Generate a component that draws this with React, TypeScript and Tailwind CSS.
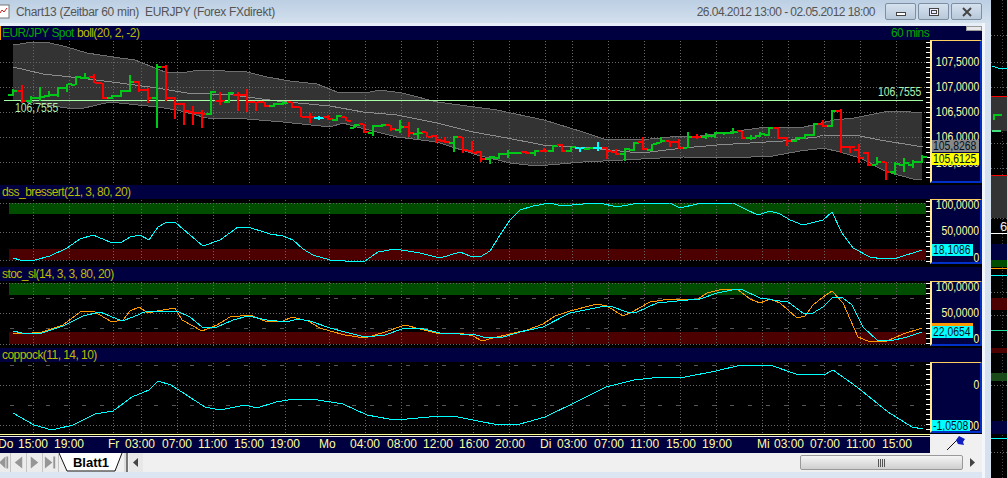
import type { ReactNode } from 'react'

type Bar = [number, number, number, number, number, string]
type Pt = [number, number]

const G = '#00c818'
const R = '#ff0000'
const C = '#00ffff'

// x, high, low, open, close, colour (page pixels)
const bars: Bar[] = [
  [13, 89, 96, 95, 91, G], [22, 85, 103, 91, 101, R], [31, 96, 103, 101, 98, G], [40, 87, 101, 98, 97, G],
  [49, 91, 97, 96, 95, G], [58, 87, 97, 95, 88, G], [67, 84, 92, 88, 84, G], [76, 76, 85, 85, 77, G],
  [85, 73, 79, 78, 78, G], [94, 74, 83, 77, 83, R], [103, 83, 99, 83, 98, R], [112, 95, 99, 98, 96, G],
  [121, 90, 97, 96, 91, G], [130, 75, 92, 91, 82, G], [139, 81, 92, 82, 90, R], [148, 88, 103, 90, 98, R],
  [157, 64, 128, 98, 67, G], [166, 65, 101, 67, 98, R], [175, 97, 119, 98, 104, R], [184, 103, 125, 104, 111, R],
  [193, 106, 125, 112, 113, R], [202, 110, 128, 113, 114, R], [211, 91, 115, 114, 92, G], [220, 92, 105, 101, 101, R],
  [229, 92, 103, 102, 93, G], [238, 92, 111, 95, 95, R], [247, 89, 112, 95, 102, R], [256, 102, 111, 102, 102, R],
  [265, 102, 107, 102, 106, R], [274, 103, 107, 106, 104, G], [283, 101, 105, 104, 103, G], [292, 102, 108, 102, 107, R],
  [301, 107, 117, 107, 117, R], [310, 113, 123, 117, 117, R], [319, 116, 120, 118, 118, C], [328, 115, 120, 117, 119, R],
  [337, 115, 121, 120, 116, G], [346, 117, 121, 117, 121, R], [355, 124, 128, 128, 125, G], [364, 124, 133, 124, 132, R],
  [373, 125, 136, 133, 126, G], [382, 124, 127, 126, 125, G], [391, 125, 131, 125, 129, R], [400, 120, 133, 130, 127, G],
  [409, 122, 137, 127, 133, R], [418, 128, 139, 134, 133, G], [427, 132, 137, 132, 137, R], [436, 135, 143, 136, 140, R],
  [445, 137, 143, 141, 142, R], [454, 136, 152, 143, 137, G], [463, 137, 153, 137, 150, R], [472, 141, 153, 151, 153, R],
  [481, 151, 162, 152, 159, R], [490, 156, 164, 159, 157, G], [499, 153, 159, 158, 154, G], [508, 150, 158, 154, 153, G],
  [517, 152, 154, 153, 153, G], [526, 151, 154, 152, 153, R], [535, 150, 156, 153, 151, G], [544, 148, 152, 151, 151, R],
  [553, 145, 152, 151, 146, G], [562, 144, 152, 145, 151, R], [571, 147, 152, 151, 147, G], [580, 148, 152, 148, 148, C],
  [589, 148, 150, 149, 148, G], [598, 142, 151, 148, 148, C], [607, 147, 159, 148, 151, R], [616, 149, 155, 152, 154, R],
  [625, 148, 161, 154, 149, G], [634, 142, 151, 150, 143, G], [643, 137, 150, 142, 149, R], [652, 144, 151, 150, 144, G],
  [661, 137, 143, 143, 141, G], [670, 141, 147, 141, 142, R], [679, 139, 149, 142, 148, R], [688, 132, 148, 148, 137, G],
  [697, 134, 139, 137, 137, R], [706, 133, 139, 137, 136, G], [715, 132, 138, 136, 133, G], [724, 132, 135, 133, 133, G],
  [733, 128, 134, 133, 132, G], [742, 131, 139, 131, 138, R], [751, 135, 140, 138, 138, G], [760, 132, 137, 136, 134, G],
  [769, 127, 136, 135, 128, G], [778, 127, 139, 128, 138, R], [787, 137, 146, 138, 141, R], [796, 137, 142, 141, 138, G],
  [805, 134, 139, 138, 135, G], [814, 123, 136, 135, 124, G], [823, 120, 127, 124, 126, R], [832, 110, 127, 126, 111, G],
  [841, 109, 153, 111, 147, R], [850, 146, 153, 147, 147, R], [859, 144, 163, 150, 158, R], [868, 152, 166, 153, 165, R],
  [877, 157, 165, 165, 162, G], [886, 162, 180, 162, 172, R], [895, 162, 175, 172, 164, G], [904, 158, 172, 165, 163, G],
  [913, 160, 168, 165, 162, G], [922, 155, 163, 162, 157, G],
]

const upper: Pt[] = [[13, 45], [33, 42], [46, 42], [67, 47], [87, 53], [113, 57], [135, 60], [150, 66], [165, 72], [180, 73], [200, 70], [225, 71], [247, 72], [267, 77], [290, 81], [317, 84], [337, 92], [365, 93], [380, 90], [402, 93], [437, 102], [497, 110], [544, 120], [583, 132], [607, 140], [650, 139], [670, 137], [700, 136], [737, 131], [767, 127], [800, 128], [834, 120], [854, 118], [884, 112], [900, 111], [922, 113]]
const middle: Pt[] = [[13, 67], [43, 74], [80, 78], [120, 83], [157, 88], [187, 93], [233, 95], [277, 101], [330, 106], [363, 112], [397, 115], [437, 123], [473, 132], [507, 138], [543, 145], [590, 148], [630, 152], [650, 152], [683, 148], [717, 145], [750, 143], [783, 141], [817, 137], [823, 135], [860, 136], [880, 140], [923, 147]]
const lower: Pt[] = [[13, 100], [67, 108], [80, 109], [110, 102], [157, 107], [177, 110], [207, 118], [247, 119], [283, 122], [330, 127], [343, 123], [357, 127], [397, 137], [437, 142], [477, 155], [510, 163], [537, 166], [583, 162], [623, 160], [660, 158], [683, 157], [730, 158], [773, 156], [800, 151], [817, 149], [823, 148], [840, 152], [860, 158], [887, 172], [913, 179], [922, 180]]

const dss: Pt[] = [[13, 258], [20, 260], [35, 260], [50, 256], [67, 248], [80, 239], [93, 235], [110, 242], [122, 242], [130, 237], [140, 235], [149, 240], [158, 227], [167, 222], [176, 223], [190, 235], [203, 246], [220, 240], [238, 227], [248, 227], [270, 234], [283, 236], [293, 240], [303, 249], [313, 255], [330, 260], [345, 261], [365, 261], [378, 252], [395, 249], [420, 253], [440, 258], [460, 252], [470, 256], [480, 257], [490, 251], [500, 235], [510, 220], [520, 210], [533, 206], [550, 203], [562, 206], [583, 204], [600, 203], [617, 207], [633, 204], [670, 203], [680, 208], [697, 204], [733, 203], [747, 210], [758, 215], [770, 211], [780, 214], [790, 220], [803, 225], [823, 220], [832, 212], [842, 233], [853, 248], [870, 257], [883, 259], [897, 258], [922, 250]]
const stocBlue: Pt[] = [[13, 331], [22, 333], [42, 333], [63, 326], [83, 316], [100, 312], [110, 316], [122, 321], [133, 317], [147, 311], [163, 312], [177, 311], [190, 317], [202, 327], [217, 327], [233, 320], [248, 316], [267, 320], [287, 322], [297, 319], [310, 321], [330, 328], [345, 332], [365, 337], [385, 335], [405, 328], [420, 328], [440, 333], [460, 334], [473, 334], [483, 337], [500, 338], [520, 332], [543, 327], [570, 313], [600, 307], [610, 306], [627, 312], [635, 313], [657, 303], [677, 301], [700, 299], [717, 293], [737, 289], [743, 290], [760, 298], [780, 301], [788, 302], [803, 313], [813, 313], [823, 307], [833, 297], [843, 298], [852, 305], [863, 327], [877, 340], [890, 341], [907, 337], [922, 332]]
const stocOrange: Pt[] = [[13, 333], [22, 334], [42, 332], [63, 325], [80, 312], [93, 311], [112, 322], [123, 320], [130, 311], [139, 307], [148, 313], [157, 311], [175, 308], [182, 320], [202, 331], [217, 325], [230, 317], [250, 315], [265, 321], [283, 321], [292, 317], [308, 321], [320, 328], [330, 331], [345, 335], [365, 338], [385, 332], [405, 325], [420, 329], [440, 334], [460, 333], [473, 336], [482, 341], [493, 338], [527, 330], [543, 324], [555, 316], [570, 311], [597, 304], [607, 306], [623, 316], [632, 312], [650, 302], [670, 299], [698, 299], [707, 293], [723, 289], [737, 289], [750, 299], [760, 303], [770, 299], [780, 303], [788, 310], [797, 318], [805, 316], [813, 305], [823, 297], [832, 291], [843, 303], [858, 337], [870, 342], [887, 341], [903, 334], [922, 328]]
const coppock: Pt[] = [[13, 413], [34, 425], [52, 430], [73, 425], [95, 414], [113, 411], [132, 397], [149, 390], [158, 381], [171, 385], [205, 407], [220, 410], [245, 405], [257, 408], [276, 402], [294, 399], [312, 399], [343, 404], [367, 415], [389, 419], [407, 419], [429, 417], [453, 416], [478, 421], [499, 425], [520, 424], [545, 417], [576, 402], [606, 387], [634, 380], [661, 377], [680, 378], [716, 371], [741, 365], [756, 366], [770, 365], [796, 374], [824, 375], [833, 370], [857, 387], [888, 412], [912, 427], [923, 429]]

const gridX = [33, 69, 113, 141, 177, 213, 249, 285, 329, 365, 401, 437, 473, 509, 545, 572, 608, 644, 680, 716, 762, 788, 824, 860, 896]

const timeLabels: [string, number][] = [
  ['Do', -2], ['15:00', 18], ['19:00', 54], ['Fr', 108], ['03:00', 125], ['07:00', 162], ['11:00', 198], ['15:00', 234], ['19:00', 270],
  ['Mo', 319], ['04:00', 350], ['08:00', 387], ['12:00', 423], ['16:00', 459], ['20:00', 495], ['Di', 540], ['03:00', 557], ['07:00', 594],
  ['11:00', 630], ['15:00', 666], ['19:00', 702], ['Mi', 757], ['03:00', 774], ['07:00', 810], ['11:00', 846], ['15:00', 882],
]

const pts = (p: Pt[]) => p.map(([x, y]) => `${x},${y}`).join(' ')

function Grid({ top, h, rows, dashed = [] }: { top: number; h: number; rows: number[]; dashed?: number[] }) {
  const ticks = []
  for (let y = top + 2; y < top + h - 3; y += 5) ticks.push(y)
  return (
    <g shapeRendering="crispEdges">
      {gridX.map((x) => (
        <line key={x} x1={x + 0.5} x2={x + 0.5} y1={top + 1} y2={top + h - 1} stroke="#666" strokeDasharray="1 2" />
      ))}
      {rows.map((y) => (
        <line key={y} x1={0} x2={926} y1={y + 0.5} y2={y + 0.5} stroke="#666" strokeDasharray="1 2" />
      ))}
      {dashed.map((y) => (
        <line key={y} x1={10} x2={926} y1={y + 0.5} y2={y + 0.5} stroke="#555" strokeDasharray="4 14" />
      ))}
      {ticks.map((y) => (
        <line key={y} x1={926} x2={930} y1={y + 0.5} y2={y + 0.5} stroke="#fff" />
      ))}
    </g>
  )
}

function Curve({ p, color }: { p: Pt[]; color: string }) {
  return <polyline points={pts(p)} fill="none" stroke={color} strokeWidth={1} shapeRendering="crispEdges" />
}

function Zones({ green, red }: { green: [number, number]; red: [number, number] }) {
  return (
    <g shapeRendering="crispEdges">
      <rect x={9} y={green[0]} width={917} height={green[1] - green[0]} fill="#004d00" />
      <rect x={9} y={red[0]} width={917} height={red[1] - red[0]} fill="#4d0000" />
    </g>
  )
}

function Header({ children }: { children: ReactNode }) {
  return (
    <div className="relative flex h-[14px] items-center bg-[#000040] pl-[2px] text-[12px] tracking-[-0.55px] text-[#bcbc00]">
      {children}
    </div>
  )
}

function AxisLabel({ y, top, children }: { y: number; top: number; children: ReactNode }) {
  return (
    <span className="absolute right-[1px] origin-right scale-x-[0.8] text-[13px] leading-[10px] text-[#ffffa0]" style={{ top: y - top - 5 }}>
      {children}
    </span>
  )
}

function Tag({ y, top, w, bg, children }: { y: number; top: number; w: number; bg: string; children: ReactNode }) {
  return (
    <span className="absolute left-0 h-[12px] pl-[1px] text-[13px] leading-[12px] text-[#001020]" style={{ top: y - top, width: w, backgroundColor: bg }}>
      <span className="inline-block origin-left scale-x-[0.8]">{children}</span>
    </span>
  )
}

function Pane({ top, h, axisH, axis, children, over }: { top: number; h: number; axisH: number; axis: ReactNode; children: ReactNode; over?: ReactNode }) {
  return (
    <div className="relative flex bg-black" style={{ height: h }}>
      <svg width={930} height={h} viewBox={`0 ${top} 930 ${h}`} className="block shrink-0">
        {children}
      </svg>
      <div
        className="relative w-[52px] overflow-hidden border-t border-l-2 border-r-2 border-b-2 border-t-[#ffd060] border-l-[#ffe98a] border-r-[#0030c8] border-b-[#0030c8] bg-[#000040]"
        style={{ height: axisH }}
      >
        {axis}
      </div>
      {over}
    </div>
  )
}

function WinButton({ children }: { children: ReactNode }) {
  return (
    <div className="flex h-[17px] w-[31px] items-center justify-center rounded-[2px] border border-[#7f8fa3] bg-gradient-to-b from-[#d5e1ee] to-[#b9c9da]">
      {children}
    </div>
  )
}

function NavArrow({ d, w = 16 }: { d: string; w?: number }) {
  return (
    <svg width={w} height={19} viewBox={`0 0 ${w} 19`} className="block shrink-0 border-r border-[#c4c4c4] bg-[#ececec]">
      <path d={d} fill="#969696" />
    </svg>
  )
}

function PriceChart() {
  return (
    <Pane
      top={40}
      h={145}
      axisH={143}
      children={
        <>
          <polygon points={pts([...upper, ...[...lower].reverse()])} fill="#333" />
          <Grid top={40} h={145} rows={[62, 87, 112, 137, 162]} />
          <Curve p={upper} color="#6e6e6e" />
          <Curve p={middle} color="#8c8c8c" />
          <Curve p={lower} color="#6e6e6e" />
          <line x1={4} x2={923} y1={100.5} y2={100.5} stroke="#a8ffa8" shapeRendering="crispEdges" />
          <g shapeRendering="crispEdges">
            {bars.map(([x, hi, lo, o, c, col]) => (
              <g key={x} fill={col}>
                <rect x={x - 1} y={hi} width={2} height={lo - hi} />
                <rect x={x - 5} y={o - 1} width={4} height={2} />
                <rect x={x + 1} y={c - 1} width={4} height={2} />
              </g>
            ))}
          </g>
        </>
      }
      axis={
        <>
          <AxisLabel y={62} top={41}>107,5000</AxisLabel>
          <AxisLabel y={87} top={41}>107,0000</AxisLabel>
          <AxisLabel y={112} top={41}>106,5000</AxisLabel>
          <AxisLabel y={137} top={41}>106,0000</AxisLabel>
          <AxisLabel y={163} top={41}>105,5000</AxisLabel>
          <Tag y={140} top={41} w={47} bg="#888888">105,8268</Tag>
          <Tag y={153} top={41} w={47} bg="#ffff00">105,6125</Tag>
        </>
      }
      over={
        <>
          <span className="absolute left-[15px] top-[61px] origin-left scale-x-[0.8] text-[13px] leading-[14px] text-[#b0f0b0]">106,7555</span>
          <span className="absolute left-[878px] top-[45px] origin-left scale-x-[0.8] text-[13px] leading-[14px] text-[#b0f0b0]">106,7555</span>
        </>
      }
    />
  )
}

function OtherChart() {
  return (
    <svg width={16} height={478} viewBox="991 0 16 478" className="block shrink-0 bg-black" shapeRendering="crispEdges">
      {[35, 62, 87, 143, 168, 193, 218, 292, 315, 385, 452].map((y) => (
        <line key={y} x1={991} x2={1007} y1={y + 0.5} y2={y + 0.5} stroke="#666" strokeDasharray="1 2" />
      ))}
      <line x1={1002.5} x2={1002.5} y1={0} y2={478} stroke="#444" strokeDasharray="1 2" />
      <polyline points="992,66 998,68 1007,68" fill="none" stroke={C} />
      <rect x={991} y={97} width={16} height={34} fill="#333" />
      <line x1={991} x2={1007} y1={96.5} y2={96.5} stroke="#ff0000" />
      <path d="M993 120v-6h9v2h-7v4z" fill={G} />
      <rect x={992} y={130} width={9} height={2} fill="#40e080" />
      <line x1={991} x2={1007} y1={175.5} y2={175.5} stroke="#ff0000" />
      <rect x={991} y={176} width={16} height={42} fill="#333" />
      <text x={1000} y={231} fill="#eee" fontSize={13}>6</text>
      <line x1={991} x2={1007} y1={233.5} y2={233.5} stroke="#fff" />
      <rect x={991} y={244} width={16} height={16} fill="#000040" />
      <rect x={991} y={260} width={16} height={7} fill="#004d00" />
      <line x1={991} x2={1007} y1={268.5} y2={268.5} stroke="#ff9900" />
      <line x1={991} x2={1007} y1={275.5} y2={275.5} stroke={C} />
      <rect x={991} y={298} width={16} height={12} fill="#4d0000" />
      <line x1={991} x2={1007} y1={330.5} y2={330.5} stroke="#20e0a0" />
      <rect x={991} y={348} width={16} height={5} fill="#4d0000" />
      <rect x={991} y={373} width={16} height={8} fill="#1a4a1a" />
      <rect x={991} y={421} width={16} height={13} fill="#000040" />
      <line x1={991} x2={1007} y1={438.5} y2={438.5} stroke={C} />
    </svg>
  )
}

export default function App() {
  return (
    <div className="flex h-[478px] w-[1007px] overflow-hidden bg-black font-['Liberation_Sans',Arial,sans-serif]">
      <div className="flex w-[991px] shrink-0 flex-col bg-[#dbe6f2]">
        {/* Title bar */}
        <div className="flex h-[23px] items-center bg-gradient-to-b from-[#bccfe3] to-[#d3e0ee] text-[12px] text-[#555]">
          <svg width={10} height={15} viewBox="0 0 10 15" className="shrink-0">
            <rect x={-3} y={1} width={12} height={13} fill="#fff" stroke="#777" />
            <path d="M0 9l2-3 2 2 3-4" fill="none" stroke="#d02020" />
          </svg>
          <span className="ml-[6px] whitespace-pre tracking-[-0.32px]">Chart13 (Zeitbar 60 min)  EURJPY (Forex FXdirekt)</span>
          <span className="ml-auto mr-[10px] whitespace-pre tracking-[-0.55px]">26.04.2012 13:00 - 02.05.2012 18:00</span>
          <div className="mr-[9px] flex gap-[2px]">
            <WinButton>
              <div className="mt-[4px] h-[4px] w-[10px] border border-[#444] bg-white" />
            </WinButton>
            <WinButton>
              <div className="h-[8px] w-[10px] border border-[#444] bg-[#eef] p-[1px]">
                <div className="h-full w-full border border-[#444]" />
              </div>
            </WinButton>
            <WinButton>
              <svg width={12} height={10} viewBox="0 0 12 10">
                <path d="M2 1l8 8M10 1l-8 8" stroke="#444" strokeWidth={2} />
              </svg>
            </WinButton>
          </div>
        </div>

        <div className="flex flex-1">
          <div className="flex w-[982px] shrink-0 flex-col">
            <div className="h-[3px] bg-[#e6eef7]" />

            <Header>
              <div className="absolute left-0 top-0 h-full w-[1px] bg-[#ff9a00]" />
              <span className="text-[#00a800]">EUR/JPY Spot</span>
              <span className="ml-[3px]">boll(20, 2, -2)</span>
              <span className="absolute left-[891px] text-[#00a800]">60 mins</span>
              <div className="absolute right-0 top-0 h-[5px] w-[16px] border border-[#999] bg-[#e8e8e8]" />
            </Header>
            <PriceChart />

            <Header>dss_bressert(21, 3, 80, 20)</Header>
            <Pane
              top={199}
              h={68}
              axisH={65}
              axis={
                <>
                  <AxisLabel y={205} top={200}>100,0000</AxisLabel>
                  <AxisLabel y={231} top={200}>50,0000</AxisLabel>
                  <AxisLabel y={258} top={200}>0</AxisLabel>
                  <Tag y={244} top={200} w={41} bg={C}>18,1086</Tag>
                </>
              }
            >
              <Zones green={[203, 214]} red={[249, 260]} />
              <Grid top={199} h={68} rows={[203, 232, 260]} />
              <Curve p={dss} color={C} />
            </Pane>

            <Header>stoc_sl(14, 3, 3, 80, 20)</Header>
            <Pane
              top={281}
              h={67}
              axisH={65}
              axis={
                <>
                  <AxisLabel y={287} top={282}>100,0000</AxisLabel>
                  <AxisLabel y={313} top={282}>50,0000</AxisLabel>
                  <AxisLabel y={339} top={282}>0</AxisLabel>
                  <div className="absolute left-0 top-[41px] h-[4px] w-[41px] bg-[#ff9900]" />
                  <Tag y={326} top={282} w={41} bg={C}>22,0654</Tag>
                </>
              }
            >
              <Zones green={[283, 295]} red={[332, 344]} />
              <Grid top={281} h={67} rows={[283, 313, 344]} dashed={[298, 328]} />
              <Curve p={stocOrange} color="#ff9900" />
              <Curve p={stocBlue} color={C} />
            </Pane>

            <Header>coppock(11, 14, 10)</Header>
            <Pane
              top={362}
              h={72}
              axisH={71}
              axis={
                <>
                  <AxisLabel y={385} top={363}>0</AxisLabel>
                  <AxisLabel y={426} top={363}>-1,0000</AxisLabel>
                  <Tag y={420} top={363} w={38} bg={C}>-1,0508</Tag>
                </>
              }
            >
              <Grid top={362} h={72} rows={[385, 425]} dashed={[365, 405]} />
              <Curve p={coppock} color={C} />
            </Pane>

            {/* Time axis */}
            <div className="flex h-[19px]">
              <div className="relative w-[930px] shrink-0 overflow-hidden bg-[#000040]">
                <div className="h-[1px] bg-[#ffff99]" />
                <div className="h-[1px] bg-black" />
                <div className="h-[1px] bg-[#e8e8e8]" />
                {timeLabels.map(([t, x]) => (
                  <span key={`${t}-${x}`} className="absolute top-[3px] text-[12px] leading-[15px] text-[#ffffa0]" style={{ left: x }}>
                    {t}
                  </span>
                ))}
              </div>
              <div className="flex flex-1 items-center justify-center bg-[#f0f0f0] pb-[2px]">
                <svg width={20} height={16} viewBox="0 0 20 16">
                  <path d="M1 15L11 5" stroke="#111" />
                  <path d="M10 5l3-4 6 3-2 3 1 3-6-1z" fill="#1020c0" />
                </svg>
              </div>
            </div>

            {/* Sheet tabs and scroll bar */}
            <div className="flex h-[19px] items-stretch bg-[#f0f0f0]">
              <NavArrow w={11} d="M-1 9.500l7-6.500v13zM9 3v13H7V3z" />
              <NavArrow d="M4 9.500l8-6.500v13z" />
              <NavArrow d="M4 3l8 6.500-8 6.500z" />
              <NavArrow d="M2 3l8 6.500-8 6.500zM11 3v13h2V3z" />
              <div className="relative flex w-[64px] shrink-0 items-center justify-center text-[13px] font-bold text-black">
                <svg width={64} height={19} viewBox="0 0 64 19" className="absolute inset-0">
                  <path d="M0 0L8 18H56L63 0z" fill="#fff" />
                  <path d="M0 0L8 18H56L63 0" fill="none" stroke="#111" />
                </svg>
                <span className="relative">Blatt1</span>
              </div>
              <div className="mx-[1px] w-[4px] border-r-2 border-[#777] bg-[#ddd]" />
              <div className="flex w-[14px] items-center justify-center bg-[#e8e8e8]">
                <svg width={6} height={9} viewBox="0 0 6 9">
                  <path d="M5 0v9L0 4.500z" fill="#444" />
                </svg>
              </div>
              <div className="flex-1" />
              <div className="flex h-[15px] w-[163px] items-center justify-center self-center rounded-[2px] border border-[#999] bg-gradient-to-b from-[#f4f4f4] to-[#cfcfcf]">
                <div className="flex h-[8px] gap-[1px]">
                  <div className="w-[1px] bg-[#555]" />
                  <div className="w-[1px] bg-[#555]" />
                  <div className="w-[1px] bg-[#555]" />
                  <div className="w-[1px] bg-[#555]" />
                </div>
              </div>
              <div className="flex w-[19px] items-center justify-center">
                <svg width={6} height={9} viewBox="0 0 6 9">
                  <path d="M0 0v9l5-4.500z" fill="#444" />
                </svg>
              </div>
            </div>
            <div className="flex-1" />
          </div>
          <div className="flex-1 border-l-[3px] border-white/70 bg-[#d6e1ef]" />
        </div>
      </div>
      <OtherChart />
    </div>
  )
}
